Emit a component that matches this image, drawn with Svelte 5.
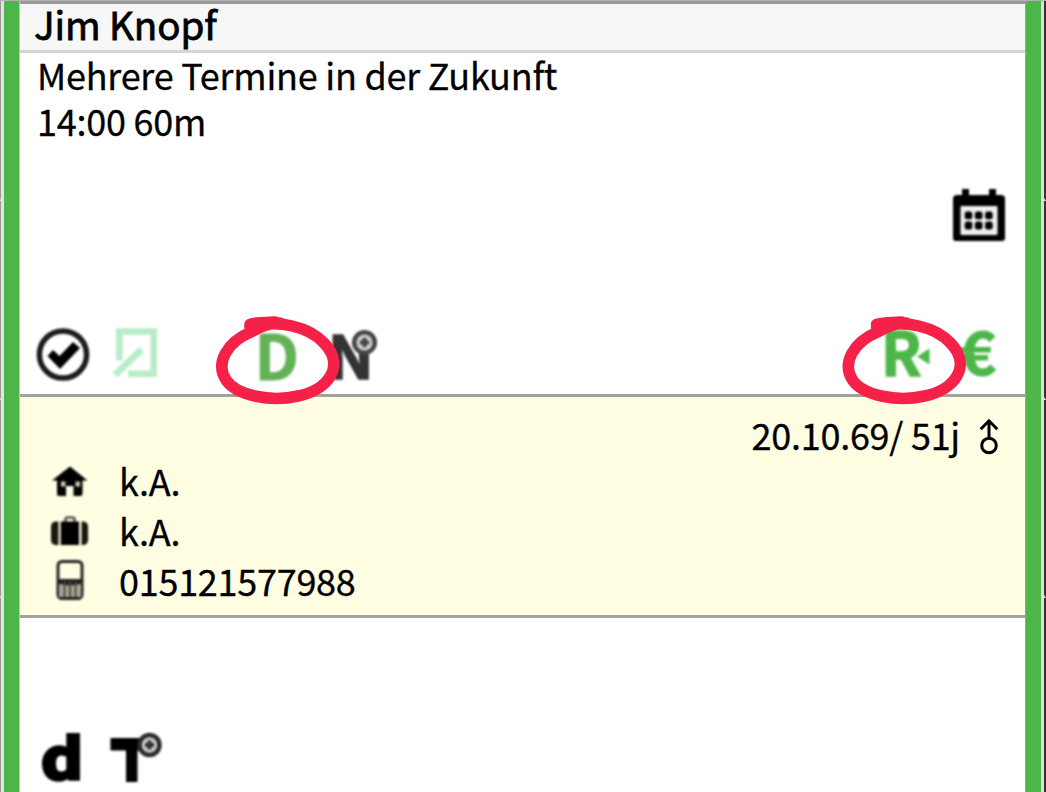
<script lang="ts">
	interface Contact {
		kind: 'home' | 'work' | 'mobile';
		value: string;
	}
	const patient = { name: 'Jim Knopf', born: '20.10.69', age: '51j' };
	const contacts: Contact[] = [
		{ kind: 'home', value: 'k.A.' },
		{ kind: 'work', value: 'k.A.' },
		{ kind: 'mobile', value: '015121577988' }
	];
	const slots = [0, 1, 2, 3];
</script>

<div class="column">
	<div class="edge left">
		{#each slots as s (s)}<i></i>{/each}
	</div>
	<div class="card">
		<header><span class="name">{patient.name}</span></header>

		<section class="termin">
			<div class="line">Mehrere Termine in der Zukunft</div>
			<div class="line">14:00 60m</div>
			<div class="cal">
				<svg class="soft" width="54" height="56" viewBox="952 187 54 56">
					<path d="M953 199q0-4 4-4h5v-6h7v6h20v-6h7v6h5q4 0 4 4v39q0 3-3 3h-46q-3 0-3-3z" />
					<rect x="960.5" y="206" width="37" height="29" rx="1" fill="#f0f0f0" />
					{#each [968.5, 978.7, 988.9] as x}
						<rect x={x - 3.8} y="211.5" width="7.6" height="7.8" rx="2.5" />
						<rect x={x - 3.8} y="221.6" width="7.6" height="7.8" rx="2.5" />
					{/each}
				</svg>
			</div>
			<div class="status">
				<svg class="soft" width="54" height="56" viewBox="36 327 54 56">
					<circle cx="63" cy="354.5" r="23.6" fill="none" stroke="#1c1c1c" stroke-width="5.5" />
					<path d="M47.5 356l5.5-6 6.5 6 13.5-14 7 6-20 21z" />
				</svg>
				<svg class="soft form" width="50" height="56" viewBox="111 327 50 56">
					<g fill="none" stroke="#b8edc8" stroke-width="6.6">
						<path d="M119.4 360.5V331.5H153.7V373.7H128" />
						<path d="M115 375L141.5 349.5" stroke-width="7" />
					</g>
				</svg>
				<svg class="soft doc" width="46" height="56" viewBox="254 327 46 56">
					<text x="254.5" y="379.5" font-size="61.5" fill="#63b356" stroke="#63b356" stroke-width="0.8" textLength="44.5" lengthAdjust="spacingAndGlyphs">D</text>
				</svg>
				<svg class="soft note" width="50" height="56" viewBox="329 327 50 56">
					<text x="327.8" y="379" font-size="60" fill="#333" stroke="#333" stroke-width="1.5" textLength="46" lengthAdjust="spacingAndGlyphs">N</text>
					<circle cx="364.5" cy="342.5" r="10.3" fill="#d2d2d2" stroke="#444" stroke-width="4.5" />
					<path d="M359.8 342.5h9.4M364.5 337.8v9.4" stroke="#444" stroke-width="4" />
				</svg>
				<svg class="soft recipe" width="50" height="56" viewBox="882 327 50 56">
					<text x="881" y="376" font-size="61" fill="#4cb748" stroke="#4cb748" stroke-width="1.5" textLength="40.5" lengthAdjust="spacingAndGlyphs">R</text>
					<path d="M917 356.5l12.5-8v16z" fill="#4cb748" />
				</svg>
				<svg class="soft euro" width="36" height="56" viewBox="962 327 36 56">
					<text x="959" y="374.5" font-size="60" fill="#4cb748" stroke="#4cb748" textLength="37" lengthAdjust="spacingAndGlyphs">€</text>
				</svg>
			</div>
		</section>

		<section class="person">
			<div class="birth">
				<span>{patient.born}/ {patient.age}</span>
				<svg width="22" height="40" viewBox="978 415 22 40">
					<g fill="none" stroke="#000" stroke-width="3">
						<circle cx="989" cy="444.5" r="7.3" />
						<path d="M989 437V421M980.7 428.2L989 419.8L997.3 428.2" />
					</g>
				</svg>
			</div>
			{#each contacts as c}
				<div class="contact">
					{#if c.kind === 'home'}
						<svg class="soft" width="42" height="44" viewBox="49 461 42 44">
							<path d="M70 465.5L87.5 479.5H82.5V493Q82.5 495 80 495H73.5V485H66V495H59Q57 495 57 493V479.5H52z" />
							<path d="M61 480.5h4.5v5H61zM75.5 480.5H80v5h-4.5z" fill="#cfccb5" />
						</svg>
					{:else if c.kind === 'work'}
						<svg class="soft" width="42" height="44" viewBox="49 511 42 44">
							<path d="M65.5 521v-3q0-1.5 2-1.5h5q2 0 2 1.5v3" fill="none" stroke="#555548" stroke-width="2.5" />
							<path d="M60.7 520.5h18.3v23.5H60.7z" />
							<path d="M58.5 520.5v23.5h-3.5q-4-1-4-5v-13.5q0-4 4-5zM81.5 520.5v23.5H84q4-1 4-5v-13.5q0-4-4-5z" fill="#17170f" />
						</svg>
					{:else}
						<svg class="soft" width="42" height="44" viewBox="49 562 42 44">
							<rect x="58" y="561.5" width="24" height="37" rx="4" fill="none" stroke="#222" stroke-width="3" />
							<path d="M59 580h22v17H59z" fill="#aaa997" />
							<path d="M58 579h24v4.5q-12 4-24 0z" fill="#222" />
							<path d="M64.5 582v15M70 582v15M75.5 582v15" stroke="#4b4b43" stroke-width="2" />
						</svg>
					{/if}
					<span>{c.value}</span>
				</div>
			{/each}
		</section>

		<footer>
			<svg class="soft" width="46" height="58" viewBox="40 728 46 58">
				<text x="41" y="779" font-size="55" stroke="#000" stroke-width="3.5" textLength="42" lengthAdjust="spacingAndGlyphs">d</text>
			</svg>
			<svg class="soft" width="56" height="58" viewBox="108 728 56 58">
				<path d="M110.5 738H148V750.5H137.5V782H126V750.5H110.5z" />
				<circle cx="149.5" cy="745" r="10" fill="#ccc" stroke="#2b2b2b" stroke-width="4.5" />
				<path d="M145 745h9M149.5 740.5v9" stroke="#333" stroke-width="4" />
			</svg>
		</footer>
	</div>
	<div class="edge right">
		{#each slots as s (s)}<i></i>{/each}
	</div>

	<!-- hand-drawn markers around D and R -->
	<svg class="marks" width="1046" height="792" viewBox="0 0 1046 792">
		{#each [0, 626.5] as dx}
			<g transform="translate({dx} 1)" fill="none" stroke="#f52149" stroke-width="11.5" stroke-linecap="round">
				<path d="M250 323.5C258 320.5 267 322 275 321" />
				<path d="M250 326C279 318 309 326 324 342C346 365 328 389 298 395C271 401 237 395 226 379C215 362 227 341 251 331C261 325 270 322 280 322" />
			</g>
		{/each}
	</svg>
</div>

<style>
	:global(body) { margin: 0; overflow: hidden; background: #fff; }
	.column { position: relative; box-sizing: border-box; display: flex; width: 1046px; height: 792px; border-top: 1px solid #b3b3b3; font-family: 'Noto Sans CJK SC', 'Open Sans', sans-serif; color: #000; }
	.column svg { display: block; flex: none; overflow: visible; }
	.column svg text { font-weight: 700; }
	/* low-resolution icon sprites */
	.soft { filter: blur(0.8px); }
	.edge { box-sizing: border-box; width: 20px; flex: none; background: #4cb748; display: flex; flex-direction: column; }
	.edge i { box-sizing: border-box; flex: 0 0 198.7px; border-bottom: 3px solid #e4e4e4; }
	.edge i:first-child { flex-basis: 200px; }
	.left { border-right: 1px solid #a5dba3; }
	.left i { width: 4px; border-left: 1px solid #999; border-right: 3px solid #e4e4e4; }
	.right { width: 21px; align-items: flex-end; border-left: 1px solid #6bc468; }
	.right i { width: 5px; border-left: 3px solid #dedede; border-right: 2px solid #39332f; }

	.card { flex: 1; min-width: 0; display: flex; flex-direction: column; background: #fff; }
	header { box-sizing: border-box; height: 52px; padding-left: 14px; background: #f7f7f7; border-top: 3px solid #999; border-bottom: 3px solid #d6d6d6; }
	.name { display: block; margin-top: -2px; font-size: 38.5px; line-height: 43px; letter-spacing: -0.1px; -webkit-text-stroke: 0.8px #000; }
	.termin { box-sizing: border-box; height: 344px; padding: 0 20px 0 17px; border-bottom: 3px solid #a1a1a1; display: flex; flex-direction: column; }
	.line { height: 46px; font-size: 36px; line-height: 42px; letter-spacing: -0.24px; white-space: nowrap; -webkit-text-stroke: 0.3px #000; }
	.cal { display: flex; justify-content: flex-end; margin: 42px -1px 0 0; }
	.status { display: flex; margin: 84px 0 0 -1px; }
	.form { margin-left: 21px; }
	.doc { margin-left: 93px; }
	.note { margin-left: 29px; }
	.recipe { margin-left: auto; }
	.euro { margin: 0 7px 0 30px; }

	.person { box-sizing: border-box; height: 221px; padding: 15px 25px 0 29px; background: #fffde2; border-bottom: 3px solid #a1a1a1; font-size: 36px; letter-spacing: -0.27px; -webkit-text-stroke: 0.3px #000; }
	.birth { display: flex; justify-content: flex-end; align-items: center; gap: 18px; height: 47px; line-height: 42px; }
	.birth span { padding-bottom: 3px; }
	.contact { display: flex; align-items: center; gap: 28px; height: 50px; line-height: 42px; }
	.contact span { padding-bottom: 8px; }

	footer { display: flex; padding: 110px 20px 0; gap: 22px; }
	.marks { position: absolute; left: 0; top: -1px; pointer-events: none; }
</style>
